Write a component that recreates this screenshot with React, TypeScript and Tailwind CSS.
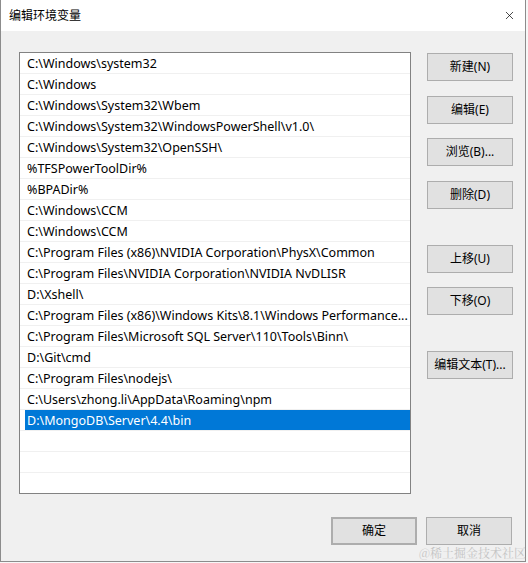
import { X } from "lucide-react";

const PATHS = [
  "C:\\Windows\\system32",
  "C:\\Windows",
  "C:\\Windows\\System32\\Wbem",
  "C:\\Windows\\System32\\WindowsPowerShell\\v1.0\\",
  "C:\\Windows\\System32\\OpenSSH\\",
  "%TFSPowerToolDir%",
  "%BPADir%",
  "C:\\Windows\\CCM",
  "C:\\Windows\\CCM",
  "C:\\Program Files (x86)\\NVIDIA Corporation\\PhysX\\Common",
  "C:\\Program Files\\NVIDIA Corporation\\NVIDIA NvDLISR",
  "D:\\Xshell\\",
  "C:\\Program Files (x86)\\Windows Kits\\8.1\\Windows Performance...",
  "C:\\Program Files\\Microsoft SQL Server\\110\\Tools\\Binn\\",
  "D:\\Git\\cmd",
  "C:\\Program Files\\nodejs\\",
  "C:\\Users\\zhong.li\\AppData\\Roaming\\npm",
  "D:\\MongoDB\\Server\\4.4\\bin",
  "",
  "",
  "",
];

const SELECTED = 17;

function Btn({ children, className = "" }: { children: React.ReactNode; className?: string }) {
  return (
    <button
      className={
        "w-[86px] h-[28px] bg-[#e1e1e1] border border-[#adadad] text-[12px] text-black flex items-center justify-center " +
        className
      }
    >
      {children}
    </button>
  );
}

export default function App() {
  return (
    <div
      className="w-[528px] h-[563px] bg-[#f7f7f7] relative overflow-hidden"
      style={{ fontFamily: '"Noto Sans", "Noto Sans CJK SC", sans-serif' }}
    >
      <div className="w-[526px] h-[562px] border-l border-r border-b border-[#8c8c8c] bg-[#f0f0f0] flex flex-col">
        {/* title bar */}
        <div className="h-[31px] bg-white flex items-center justify-between pl-[8px] pr-[9px] shrink-0">
          <span className="text-[12px] text-black">编辑环境变量</span>
          <X size={13} strokeWidth={1.3} className="text-black" />
        </div>

        <div className="flex pl-[18px] pt-[21px]">
          {/* list */}
          <div className="w-[392px] h-[442px] border border-[#828282] bg-white overflow-hidden">
            {PATHS.map((p, i) => (
              <div key={i} className="h-[21px] border-b border-[#f0f0f0] flex">
                <div
                  className={
                    "ml-[5px] flex-1 h-[20px] flex items-center pl-[2px] pt-[2px] text-[12.5px] whitespace-nowrap leading-none " +
                    (i === SELECTED ? "bg-[#0078d7] text-white" : "text-black")
                  }
                >
                  {p}
                </div>
              </div>
            ))}
          </div>

          {/* side buttons */}
          <div className="ml-[16px] flex flex-col">
            <Btn className="mt-[1px]">新建(N)</Btn>
            <Btn className="mt-[15px]">编辑(E)</Btn>
            <Btn className="mt-[14px]">浏览(B)...</Btn>
            <Btn className="mt-[15px]">删除(D)</Btn>
            <Btn className="mt-[36px]">上移(U)</Btn>
            <Btn className="mt-[14px]">下移(O)</Btn>
            <Btn className="mt-[36px]">编辑文本(T)...</Btn>
          </div>
        </div>

        {/* bottom buttons */}
        <div className="flex justify-end gap-[9px] pr-[13px] mt-[23px]">
          <Btn className="border-2 border-[#0078d7]">确定</Btn>
          <Btn>取消</Btn>
        </div>
      </div>

      <span
        className="absolute right-[2px] bottom-[4px] text-[12px] leading-none text-[#c4c4c4]"
        style={{ fontFamily: '"Noto Serif CJK SC", "Noto Sans CJK SC", serif' }}
      >
        @稀土掘金技术社区
      </span>
    </div>
  );
}
